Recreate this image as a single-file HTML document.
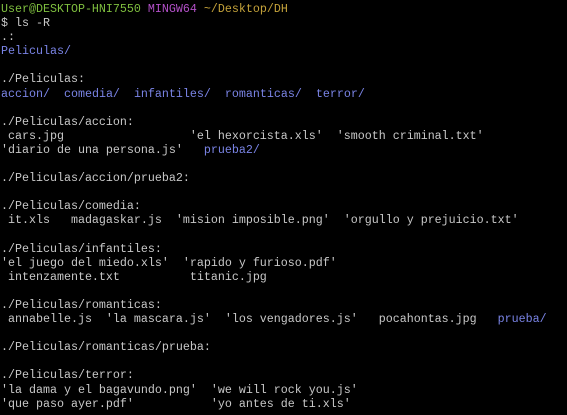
<!DOCTYPE html>
<html><head><meta charset="utf-8"><style>
html,body{margin:0;padding:0;background:#000;width:567px;height:415px;overflow:hidden}
.t{position:absolute;left:1px;top:2px;font-family:"Liberation Mono",monospace;font-size:11.67px;color:#c8c8c8}
.t div{white-space:pre;height:14.1px;line-height:14.1px;overflow:visible}
.g{color:#7fbf3f}.m{color:#b350c8}.y{color:#c4a23a}.b{color:#7a84e6}
</style></head><body><div class="t">
<div><span class="g">User@DESKTOP-HNI7550</span> <span class="m">MINGW64</span> <span class="y">~/Desktop/DH</span></div>
<div>$ ls -R</div>
<div>.:</div>
<div><span class="b">Peliculas/</span></div>
<div></div>
<div>./Peliculas:</div>
<div><span class="b">accion/</span>  <span class="b">comedia/</span>  <span class="b">infantiles/</span>  <span class="b">romanticas/</span>  <span class="b">terror/</span></div>
<div></div>
<div>./Peliculas/accion:</div>
<div> cars.jpg                  'el hexorcista.xls'  'smooth criminal.txt'</div>
<div>'diario de una persona.js'   <span class="b">prueba2/</span></div>
<div></div>
<div>./Peliculas/accion/prueba2:</div>
<div></div>
<div>./Peliculas/comedia:</div>
<div> it.xls   madagaskar.js  'mision imposible.png'  'orgullo y prejuicio.txt'</div>
<div></div>
<div>./Peliculas/infantiles:</div>
<div>'el juego del miedo.xls'  'rapido y furioso.pdf'</div>
<div> intenzamente.txt          titanic.jpg</div>
<div></div>
<div>./Peliculas/romanticas:</div>
<div> annabelle.js  'la mascara.js'  'los vengadores.js'   pocahontas.jpg   <span class="b">prueba/</span></div>
<div></div>
<div>./Peliculas/romanticas/prueba:</div>
<div></div>
<div>./Peliculas/terror:</div>
<div>'la dama y el bagavundo.png'  'we will rock you.js'</div>
<div>'que paso ayer.pdf'           'yo antes de ti.xls'</div>
</div></body></html>
